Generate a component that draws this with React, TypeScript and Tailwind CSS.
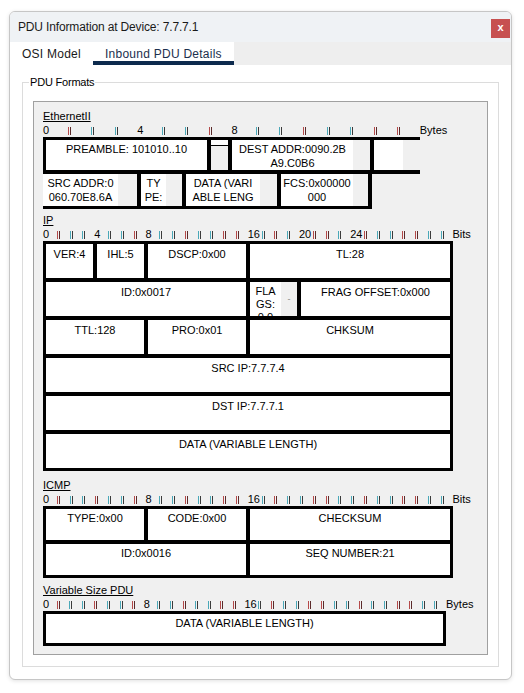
import React from 'react';

interface RulerProps {
  unit: string;
  count: number;
  labels: number[];
  end: string;
}

// Little coloured tick marks between the numbered positions
const Tick: React.FC<{ k: number }> = ({ k }) => {
  const red = (k * 5 + 2) % 7 < 3;
  return (
    <span
      className={`ml-[1px] mt-[4px] block h-[8px] w-[3px] border-x bg-[#f4f4f4] ${
        red
          ? 'border-l-[#b54a4a] border-r-[#5b2b2b]'
          : 'border-l-[#4aa8b8] border-r-[#3b3b3b]'
      }`}
    />
  );
};

const Ruler: React.FC<RulerProps> = ({ unit, count, labels, end }) => (
  <div className="flex h-[14px] leading-[14px]">
    {Array.from({ length: count }, (_, k) => (
      <div key={k} className={`${unit} shrink-0 whitespace-nowrap`}>
        {labels.includes(k) ? <span>{k}</span> : <Tick k={k} />}
      </div>
    ))}
    <span>{end}</span>
  </div>
);

const SectionLabel: React.FC<{ text: string; className?: string }> = ({
  text,
  className = '',
}) => (
  <div className={`h-[13px] leading-[13px] underline ${className}`}>
    {text}
  </div>
);

const bitGrid = 'grid grid-cols-[repeat(32,minmax(0,1fr))] gap-x-[4px]';
const ipCell = 'h-[34px] overflow-hidden bg-white pt-[3px] text-center';
const icmpCell = 'h-[31px] overflow-hidden bg-white pt-[2px] text-center';

const App: React.FC = () => {
  return (
    <div className="min-h-[693px] bg-white pl-[9px] pt-[11px] font-['Liberation_Sans',Arial,sans-serif] text-black">
      <div className="flex h-[669px] w-[503px] flex-col overflow-hidden rounded-[6px] border border-[#c6c6c6] bg-white shadow-[0_1px_4px_rgba(0,0,0,0.12)]">
        {/* Title bar */}
        <div className="flex h-[30px] shrink-0 items-start justify-between bg-[#eff2f5]">
          <span className="pl-[8px] pt-[8px] text-[12px] leading-[14px] tracking-[-0.15px] text-[#1a1a1a]">
            PDU Information at Device: 7.7.7.1
          </span>
          <button className="mr-[1px] mt-[7px] flex h-[19px] w-[19px] items-center justify-center bg-[#c75050] pb-[2px] text-[11px] font-bold leading-none text-white">
            x
          </button>
        </div>

        {/* Tabs */}
        <div className="flex h-[23px] shrink-0 text-[12px] leading-[14px] tracking-[0.25px]">
          <div className="w-[83px] bg-white pl-[12px] pt-[5px] text-[#1a1a1a]">
            OSI Model
          </div>
          <div className="w-[141px] border-b-[4px] border-[#0d2a4d] bg-white pl-[12px] pt-[5px] text-[#1c2f4d]">
            Inbound PDU Details
          </div>
          <div className="flex-1 bg-[#eeeeee]" />
        </div>

        {/* Content */}
        <div className="flex flex-1 flex-col px-[12px] pb-[12px] pt-[17px]">
          <div className="relative flex flex-1 flex-col border border-[#dcdcdc] px-[10px] pb-[11px] pt-[18px]">
            <span className="absolute -top-[8px] left-[6px] bg-white px-[1px] text-[11px] leading-[14px] tracking-[-0.2px]">
              PDU Formats
            </span>
            <div className="flex-1 border border-[#a0a0a0] bg-[#f0f0f0] pl-[9px] pt-[8px] text-[11px] leading-[14px]">
              {/* EthernetII */}
              <SectionLabel text="EthernetII" />
              <Ruler
                unit="w-[23.56px]"
                count={16}
                labels={[0, 4, 8]}
                end="Bytes"
              />
              <div className="flex w-[377px] gap-[4px] bg-black pb-[4px] pl-[3px] pt-[3px]">
                <div className="h-[30px] w-[161px] whitespace-nowrap bg-white pt-[2px] text-center">
                  PREAMBLE: 101010..10
                </div>
                <div className="flex h-[30px] w-[17px] flex-col">
                  <div className="h-[5px] bg-white" />
                  <div className="h-[1px] bg-black" />
                  <div className="flex-1 bg-[#f0f0f0]" />
                </div>
                <div className="flex h-[30px] w-[138px]">
                  <div className="w-[121px] whitespace-nowrap bg-white pt-[2px] text-center">
                    DEST ADDR:0090.2B
                    <br />
                    A9.C0B6
                  </div>
                  <div className="flex-1 bg-[#f0f0f0]" />
                </div>
                <div className="flex h-[30px] w-[46px]">
                  <div className="w-[29px] bg-white" />
                  <div className="flex-1 bg-[#f0f0f0]" />
                </div>
              </div>
              <div className="flex w-[329px] gap-[4px] bg-black pb-[3px] pr-[4px]">
                <div className="flex h-[32px] w-[94px]">
                  <div className="w-[75px] overflow-hidden whitespace-nowrap bg-white pt-[2px] text-center">
                    SRC ADDR:0
                    <br />
                    060.70E8.6A
                  </div>
                  <div className="flex-1 bg-[#f0f0f0]" />
                </div>
                <div className="flex h-[32px] w-[41px]">
                  <div className="w-[25px] overflow-hidden whitespace-nowrap bg-white pt-[2px] text-center">
                    TY
                    <br />
                    PE:
                  </div>
                  <div className="flex-1 bg-[#f0f0f0]" />
                </div>
                <div className="flex h-[32px] w-[91px]">
                  <div className="w-[74px] overflow-hidden whitespace-nowrap bg-white pt-[2px] text-center">
                    DATA (VARI
                    <br />
                    ABLE LENG
                  </div>
                  <div className="flex-1 bg-[#f0f0f0]" />
                </div>
                <div className="flex h-[32px] w-[87px]">
                  <div className="w-[72px] overflow-hidden whitespace-nowrap bg-white pt-[2px] text-center">
                    FCS:0x00000
                    <br />
                    000
                  </div>
                  <div className="flex-1 bg-[#f0f0f0]" />
                </div>
              </div>

              {/* IP */}
              <SectionLabel text="IP" className="mt-[5px]" />
              <Ruler
                unit="w-[12.8px]"
                count={32}
                labels={[0, 4, 8, 16, 20, 24]}
                end="Bits"
              />
              <div className="flex w-[410px] flex-col gap-[4px] bg-black p-[3px]">
                <div className={bitGrid}>
                  <div className={`col-span-4 ${ipCell}`}>VER:4</div>
                  <div className={`col-span-4 ${ipCell}`}>IHL:5</div>
                  <div className={`col-span-8 ${ipCell}`}>DSCP:0x00</div>
                  <div className={`col-span-16 ${ipCell}`}>TL:28</div>
                </div>
                <div className={bitGrid}>
                  <div className={`col-span-16 ${ipCell}`}>ID:0x0017</div>
                  <div className="col-span-4 flex h-[34px]">
                    <div className="w-[31px] overflow-hidden bg-white pt-[3px] text-center leading-[13px]">
                      FLA
                      <br />
                      GS:
                      <br />0 0
                    </div>
                    <div className="flex flex-1 items-center justify-center bg-[#f0f0f0] text-[9px] text-[#888]">
                      -
                    </div>
                  </div>
                  <div className={`col-span-12 ${ipCell}`}>
                    FRAG OFFSET:0x000
                  </div>
                </div>
                <div className={bitGrid}>
                  <div className={`col-span-8 ${ipCell}`}>TTL:128</div>
                  <div className={`col-span-8 ${ipCell}`}>PRO:0x01</div>
                  <div className={`col-span-16 ${ipCell}`}>CHKSUM</div>
                </div>
                <div className={`${ipCell}`}>SRC IP:7.7.7.4</div>
                <div className={`${ipCell}`}>DST IP:7.7.7.1</div>
                <div className={`${ipCell}`}>DATA (VARIABLE LENGTH)</div>
              </div>

              {/* ICMP */}
              <SectionLabel text="ICMP" className="mt-[8px]" />
              <Ruler
                unit="w-[12.8px]"
                count={32}
                labels={[0, 8, 16]}
                end="Bits"
              />
              <div className="flex w-[410px] flex-col gap-[4px] bg-black p-[3px]">
                <div className={bitGrid}>
                  <div className={`col-span-8 ${icmpCell}`}>TYPE:0x00</div>
                  <div className={`col-span-8 ${icmpCell}`}>CODE:0x00</div>
                  <div className={`col-span-16 ${icmpCell}`}>CHECKSUM</div>
                </div>
                <div className={bitGrid}>
                  <div className={`col-span-16 ${icmpCell}`}>ID:0x0016</div>
                  <div className={`col-span-16 ${icmpCell}`}>
                    SEQ NUMBER:21
                  </div>
                </div>
              </div>

              {/* Variable Size PDU */}
              <SectionLabel text="Variable Size PDU" className="mt-[6px]" />
              <Ruler
                unit="w-[12.6px]"
                count={32}
                labels={[0, 8, 16]}
                end="Bytes"
              />
              <div className="h-[35px] w-[403px] border-[3px] border-black bg-white pt-[2px] text-center">
                DATA (VARIABLE LENGTH)
              </div>
            </div>
          </div>
        </div>
      </div>
    </div>
  );
};

export default App;
